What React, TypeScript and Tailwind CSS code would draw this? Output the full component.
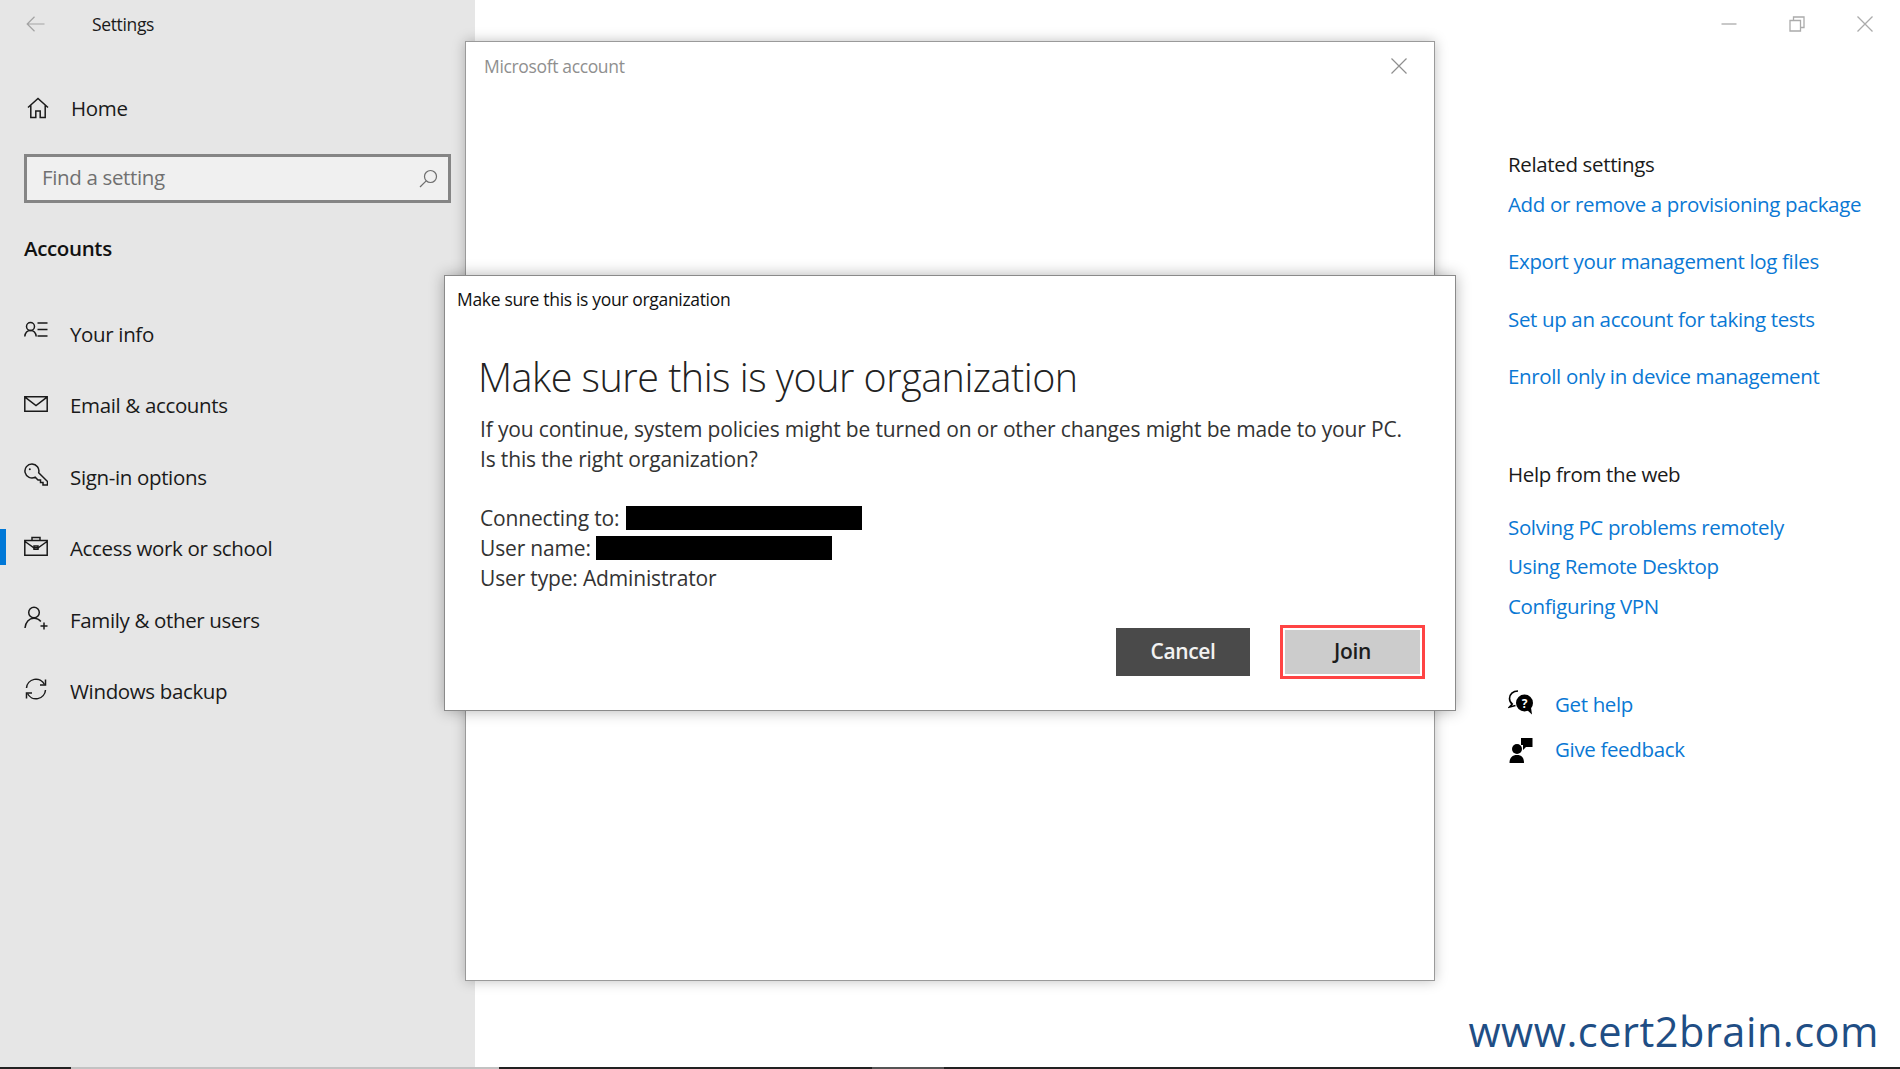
const ic = { fill: "none", stroke: "currentColor", strokeWidth: 1.5 } as const;

const icons: Record<string, JSX.Element> = {
  info: (
    <svg width="24" height="24" viewBox="0 0 24 24" {...ic}>
      <circle cx="6.500" cy="6.500" r="4" />
      <path d="M0.800 16.500c.4-3.800 2.400-6 5.700-6s5.300 2.200 5.700 6M13.500 3h10M13.500 9.500h10M13.500 16h10" />
    </svg>
  ),
  mail: (
    <svg width="24" height="24" viewBox="0 0 24 24" {...ic}>
      <path d="M0.800 4.800h22.400v14.400H.800zM1 5.200l11 8.300 11-8.300" />
    </svg>
  ),
  key: (
    <svg width="24" height="24" viewBox="0 0 24 24" {...ic}>
      <path d="M8 1a7 7 0 1 0 3.200 13.200l2.800 2.800h2.500v2.500h2.500v2.500H23.500v-3.500l-8.800-8.800A7 7 0 0 0 8 1z" />
      <circle cx="5.800" cy="6.200" r="1" fill="currentColor" stroke="none" />
    </svg>
  ),
  work: (
    <svg width="24" height="24" viewBox="0 0 24 24" {...ic}>
      <path d="M.800 5.500h22.400v14.700H.800zM8 5.500V2.500h8v3M1 6.500l8.800 6.300h4.400L23 6.500" />
      <path d="M10 11h4v3.200h-4z" />
    </svg>
  ),
  family: (
    <svg width="24" height="24" viewBox="0 0 24 24" {...ic}>
      <circle cx="10" cy="6.500" r="5.300" />
      <path d="M1 22c.4-5.800 4-9.800 9-9.800 2.800 0 5.200 1.200 6.800 3.300M20 16.500v7M16.500 20h7" />
    </svg>
  ),
  backup: (
    <svg width="24" height="24" viewBox="0 0 24 24" {...ic}>
      <path d="M2.500 11A9.500 9.500 0 0 1 20.500 7.500M21.500 13A9.500 9.500 0 0 1 3.500 16.500" />
      <path d="M21.500 2.500v5.500H16M2.500 21.500V16H8" />
    </svg>
  ),
};

const nav = [
  { k: "info", t: "Your info" },
  { k: "mail", t: "Email & accounts" },
  { k: "key", t: "Sign-in options" },
  { k: "work", t: "Access work or school", active: true },
  { k: "family", t: "Family & other users" },
  { k: "backup", t: "Windows backup" },
];

function Link({ children, h = "h-[57.500px]" }: { children: string; h?: string }) {
  return <div className={`flex items-center text-[20.500px] text-[#0a78d4] whitespace-nowrap ${h}`}>{children}</div>;
}

export default function App() {
  return (
    <div className="relative flex flex-col h-[1069px] w-[1900px] overflow-hidden bg-white font-['Open_Sans','Noto_Sans',sans-serif] text-[#1a1a1a] tracking-[-0.35px]">
      <div className="flex flex-1 min-h-0">
        {/* Sidebar */}
        <aside className="w-[475px] shrink-0 bg-[#e6e6e6] flex flex-col">
          <div className="h-[48px] flex items-center pl-[26px]">
            <svg width="19" height="16" viewBox="0 0 19 16" fill="none" stroke="#a3a3a3" strokeWidth="1.200">
              <path d="M18.500 8H1M8.500.8 1.200 8l7.300 7.200" />
            </svg>
            <span className="ml-[47px] text-[17.500px]">Settings</span>
          </div>
          <div className="h-[74px] mt-[23px] flex items-center pl-[27px] text-[20.500px]">
            <svg width="22" height="22" viewBox="0 0 22 22" fill="none" stroke="currentColor" strokeWidth="1.500">
              <path d="M1 10.500 11 1.500l10 9M3.800 8.500v12h5v-6.500h4.400v6.500h5v-12" />
            </svg>
            <span className="ml-[22px]">Home</span>
          </div>
          <div className="mx-[24px] h-[49px] mt-[9px] border-[3px] border-[#858585] bg-[#f0f0f0] flex items-center justify-between pl-[15px] pr-[10px] text-[20.500px] text-[#707070]">
            <span className="-translate-y-[1px]">Find a setting</span>
            <svg width="19" height="19" viewBox="0 0 19 19" fill="none" stroke="#6e6e6e" strokeWidth="1.200">
              <circle cx="11.500" cy="7.500" r="6" />
              <path d="M7.200 11.800 1 18" />
            </svg>
          </div>
          <div className="ml-[24px] mt-[30px] text-[20.500px] font-semibold text-[#111]">Accounts</div>
          <nav className="mt-[35px] flex flex-col">
            {nav.map((n) => (
              <div key={n.t} className="relative h-[71.400px] flex items-center pl-[24px] text-[20.500px]">
                {n.active && <div className="absolute left-0 top-[16px] h-[36px] w-[6px] bg-[#0078d7]" />}
                <span className="-translate-y-[2px]">{icons[n.k]}</span>
                <span className="ml-[22px]">{n.t}</span>
              </div>
            ))}
          </nav>
        </aside>

        {/* Main */}
        <main className="flex-1 flex flex-col min-w-0">
          <div className="flex justify-end items-center h-[48px] pr-[27px] gap-[52px] text-[#ababab]">
            <svg width="16" height="16" viewBox="0 0 16 16" fill="none" stroke="currentColor" strokeWidth="1.300"><path d="M.5 8h15" /></svg>
            <svg width="16" height="16" viewBox="0 0 16 16" fill="none" stroke="currentColor" strokeWidth="1.300"><path d="M1 4.500h10.500V15H1zM4.500 4.500V1H15v10.500h-3.500" /></svg>
            <svg width="16" height="16" viewBox="0 0 16 16" fill="none" stroke="currentColor" strokeWidth="1.300"><path d="M.5.5l15 15M15.500.5l-15 15" /></svg>
          </div>
          <section className="ml-[1033px] flex flex-col flex-1">
            <div className="mt-[102px] h-[28px] flex items-center text-[20.500px]">Related settings</div>
            <div className="-mt-[2.500px]">
              <Link>Add or remove a provisioning package</Link>
              <Link>Export your management log files</Link>
              <Link>Set up an account for taking tests</Link>
              <Link>Enroll only in device management</Link>
            </div>
            <div className="mt-[55px] h-[28px] flex items-center text-[20.500px]">Help from the web</div>
            <div className="mt-[19px]">
              <Link h="h-[39.500px]">Solving PC problems remotely</Link>
              <Link h="h-[39.500px]">Using Remote Desktop</Link>
              <Link h="h-[39.500px]">Configuring VPN</Link>
            </div>
            <div className="mt-[56px] flex items-center h-[45px]">
              <svg width="26" height="26" viewBox="0 0 26 26" className="-translate-y-[2px]">
                <path d="M10 1C5 1 1.500 4.300 1.500 8.500c0 2.300 1 4.200 2.700 5.500L1.500 17l6-1.500" fill="none" stroke="#000" strokeWidth="1.600" />
                <circle cx="16.500" cy="13" r="8.500" fill="#000" />
                <path d="M19 20l5 4.500-1-7z" fill="#000" />
                <text x="16.500" y="17.500" textAnchor="middle" fontSize="12" fontWeight="700" fill="#fff" fontFamily="Open Sans">?</text>
              </svg>
              <Link h="h-[45px] ml-[21px]">Get help</Link>
            </div>
            <div className="flex items-center h-[45px]">
              <svg width="26" height="26" viewBox="0 0 26 26">
                <circle cx="9" cy="12" r="5" fill="#000" />
                <path d="M1.500 26c0-5.500 3-8 7.500-8s7 2.500 7 8z" fill="#000" />
                <path d="M13 1h11.500v9H18l-3 3v-5h-2z" fill="#000" />
              </svg>
              <Link h="h-[45px] ml-[21px]">Give feedback</Link>
            </div>
          </section>
          <div className="flex justify-end pr-[21px] pb-[9px] text-[41.500px] leading-[54px] text-[#1f4e85] tracking-[0.5px]">
            www.cert2brain.com
          </div>
        </main>
      </div>

      {/* Bottom strip */}
      <div className="h-[2px] shrink-0 flex">
        <div className="w-[71px] bg-[#222]" />
        <div className="w-[428px] bg-[#c2c2c2]" />
        <div className="w-[373px] bg-[#222]" />
        <div className="w-[72px] bg-[#555]" />
        <div className="flex-1 bg-[#222]" />
      </div>

      {/* Microsoft account window */}
      <div className="absolute left-[465px] top-[41px] w-[970px] h-[940px] bg-white border border-[#9a9a9a] shadow-[0_0_12px_rgba(0,0,0,0.25)]">
        <div className="flex items-center justify-between h-[48px] pl-[18px] pr-[27px] text-[17.500px] text-[#8f8f8f]">
          <span>Microsoft account</span>
          <svg width="16" height="16" viewBox="0 0 16 16" fill="none" stroke="#8f8f8f" strokeWidth="1.200"><path d="M.5.5l15 15M15.500.5l-15 15" /></svg>
        </div>
      </div>

      {/* Confirmation dialog */}
      <div className="absolute left-[444px] top-[275px] w-[1012px] h-[436px] bg-white border border-[#8a8a8a] shadow-[0_0_14px_rgba(0,0,0,0.3)] flex flex-col">
        <div className="pl-[12px] pt-[11px] h-[39px] text-[17.500px] leading-[24px] tracking-[-0.33px] text-[#111]">Make sure this is your organization</div>
        <div className="pl-[33px] pr-[30px] flex-1 flex flex-col">
          <h1 className="mt-[37px] h-[50px] text-[39.500px] leading-[50px] font-light text-[#222] whitespace-nowrap tracking-[-0.500px]">Make sure this is your organization</h1>
          <div className="ml-[2px] mt-[12px] text-[21px] leading-[30px] tracking-[-0.16px] text-[#333] whitespace-nowrap">
            <p>If you continue, system policies might be turned on or other changes might be made to your PC.</p>
            <p>Is this the right organization?</p>
          </div>
          <div className="ml-[2px] mt-[29px] text-[21px] leading-[30px] tracking-[-0.16px] text-[#333]">
            <div className="flex items-center">Connecting to:<span className="ml-[7px] inline-block h-[24px] w-[236px] bg-black" /></div>
            <div className="flex items-center">User name:<span className="ml-[5px] inline-block h-[24px] w-[236px] bg-black" /></div>
            <div>User type: Administrator</div>
          </div>
          <div className="flex-1" />
        </div>
        <div className="flex justify-end items-center gap-[30px] pr-[30px] pb-[34px] text-[21px] font-semibold">
          <button className="w-[134px] h-[48px] bg-[#4a4a4a] text-[#f2f2f2]">Cancel</button>
          <div className="border-[3px] border-[#ff4444] p-[2px] -my-[5px]">
            <button className="w-[135px] h-[44px] bg-[#cccccc] text-[#1c1c1c] block">Join</button>
          </div>
        </div>
      </div>
    </div>
  );
}
